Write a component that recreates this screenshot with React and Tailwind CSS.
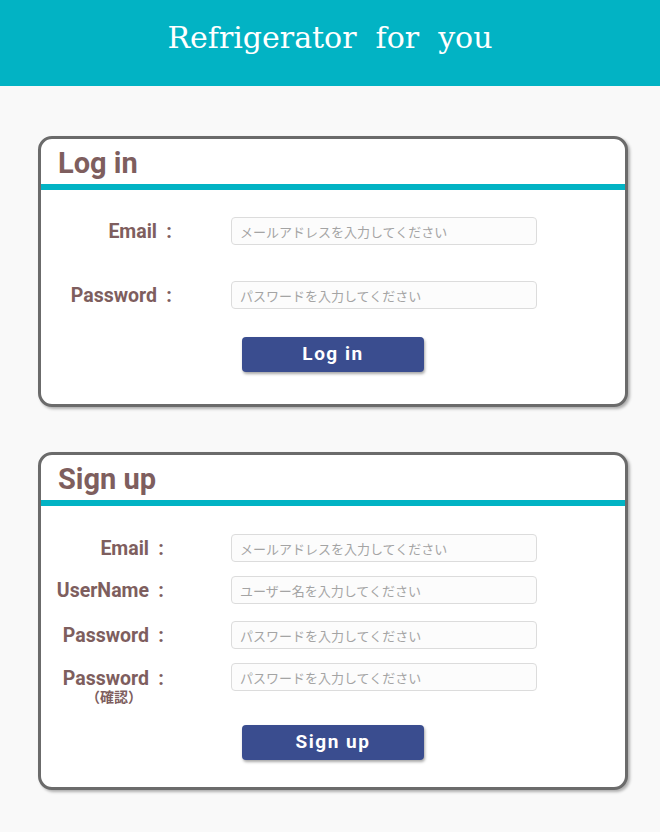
const LABEL = "text-[#7e5e5e] font-bold text-[19.5px] leading-[22px] text-right whitespace-nowrap";

const FONT_UI = { fontFamily: 'Roboto, "Noto Sans CJK JP", sans-serif' };

function Colon() {
  return <span className="ml-[5px] inline-block w-[14px] text-center text-[20px]">:</span>;
}

function Field({ placeholder, type = "text" }) {
  return (
    <input
      type={type}
      placeholder={placeholder}
      className="block h-[28px] w-[306px] rounded-[4px] border border-[#dcdcdc] bg-[#fcfcfc] pl-[8px] text-[13px] text-[#555] outline-none placeholder:text-[#a4a4a4]"
      style={{ fontFamily: '"Noto Sans CJK JP", sans-serif' }}
    />
  );
}

function Card({ title, children }) {
  return (
    <section className="w-[590px] overflow-hidden rounded-[14px] border-[3px] border-[#6b6b6b] bg-white shadow-[2px_2px_3px_rgba(0,0,0,0.3)]">
      <div className="h-[45px] pl-[17px] pt-[3px]">
        <h2 className="text-[29px] font-bold leading-[42px] text-[#7e5e5e]">{title}</h2>
      </div>
      <div className="h-[6px] bg-[#02b3c4]" />
      {children}
    </section>
  );
}

function SubmitButton({ children }) {
  return (
    <button
      type="submit"
      className="mx-auto block h-[35px] w-[182px] rounded-[4px] bg-[#3a4d8f] text-[19px] font-bold tracking-[1.5px] text-white shadow-[1px_2px_3px_rgba(0,0,0,0.35)]"
    >
      {children}
    </button>
  );
}

function Row({ label, labelWidth, gap, className = "", children }) {
  return (
    <div className={`flex items-center ${className}`}>
      <label className={`${LABEL} ${labelWidth}`}>
        {label}
        <Colon />
      </label>
      <div className={gap}>{children}</div>
    </div>
  );
}

export default function App() {
  return (
    <div className="min-h-[832px] bg-[#f9f9f9] pb-[40px]" style={FONT_UI}>
      <header className="h-[86px] bg-[#02b3c4] pt-[20px] text-center">
        <h1
          className="whitespace-pre text-[30px] leading-[35px] text-white"
          style={{ fontFamily: '"DejaVu Serif", serif' }}
        >
          {"Refrigerator  for  you"}
        </h1>
      </header>

      <main className="ml-[38px]">
        <div className="pt-[50px]">
          <Card title="Log in">
            <form className="pt-[27px] pb-[32px]">
              <Row label="Email" labelWidth="w-[135px]" gap="ml-[55px]">
                <Field placeholder="メールアドレスを入力してください" type="email" />
              </Row>
              <Row label="Password" labelWidth="w-[135px]" gap="ml-[55px]" className="mt-[36px]">
                <Field placeholder="パスワードを入力してください" type="password" />
              </Row>
              <div className="mt-[28px]">
                <SubmitButton>Log in</SubmitButton>
              </div>
            </form>
          </Card>
        </div>

        <div className="mt-[45px]">
          <Card title="Sign up">
            <form className="pt-[28px] pb-[27px]">
              <Row label="Email" labelWidth="w-[127px]" gap="ml-[63px]">
                <Field placeholder="メールアドレスを入力してください" type="email" />
              </Row>
              <Row label="UserName" labelWidth="w-[127px]" gap="ml-[63px]" className="mt-[14px]">
                <Field placeholder="ユーザー名を入力してください" />
              </Row>
              <Row label="Password" labelWidth="w-[127px]" gap="ml-[63px]" className="mt-[17px]">
                <Field placeholder="パスワードを入力してください" type="password" />
              </Row>
              <div className="mt-[14px] flex items-start">
                <div className="w-[127px] pt-[4px]">
                  <div className={LABEL}>
                    Password
                    <Colon />
                  </div>
                  <div className="pr-[26px] text-right text-[14px] font-bold leading-[14px] text-[#7e5e5e]">
                    （確認）
                  </div>
                </div>
                <div className="ml-[63px]">
                  <Field placeholder="パスワードを入力してください" type="password" />
                </div>
              </div>
              <div className="mt-[21px]">
                <SubmitButton>Sign up</SubmitButton>
              </div>
            </form>
          </Card>
        </div>
      </main>
    </div>
  );
}
